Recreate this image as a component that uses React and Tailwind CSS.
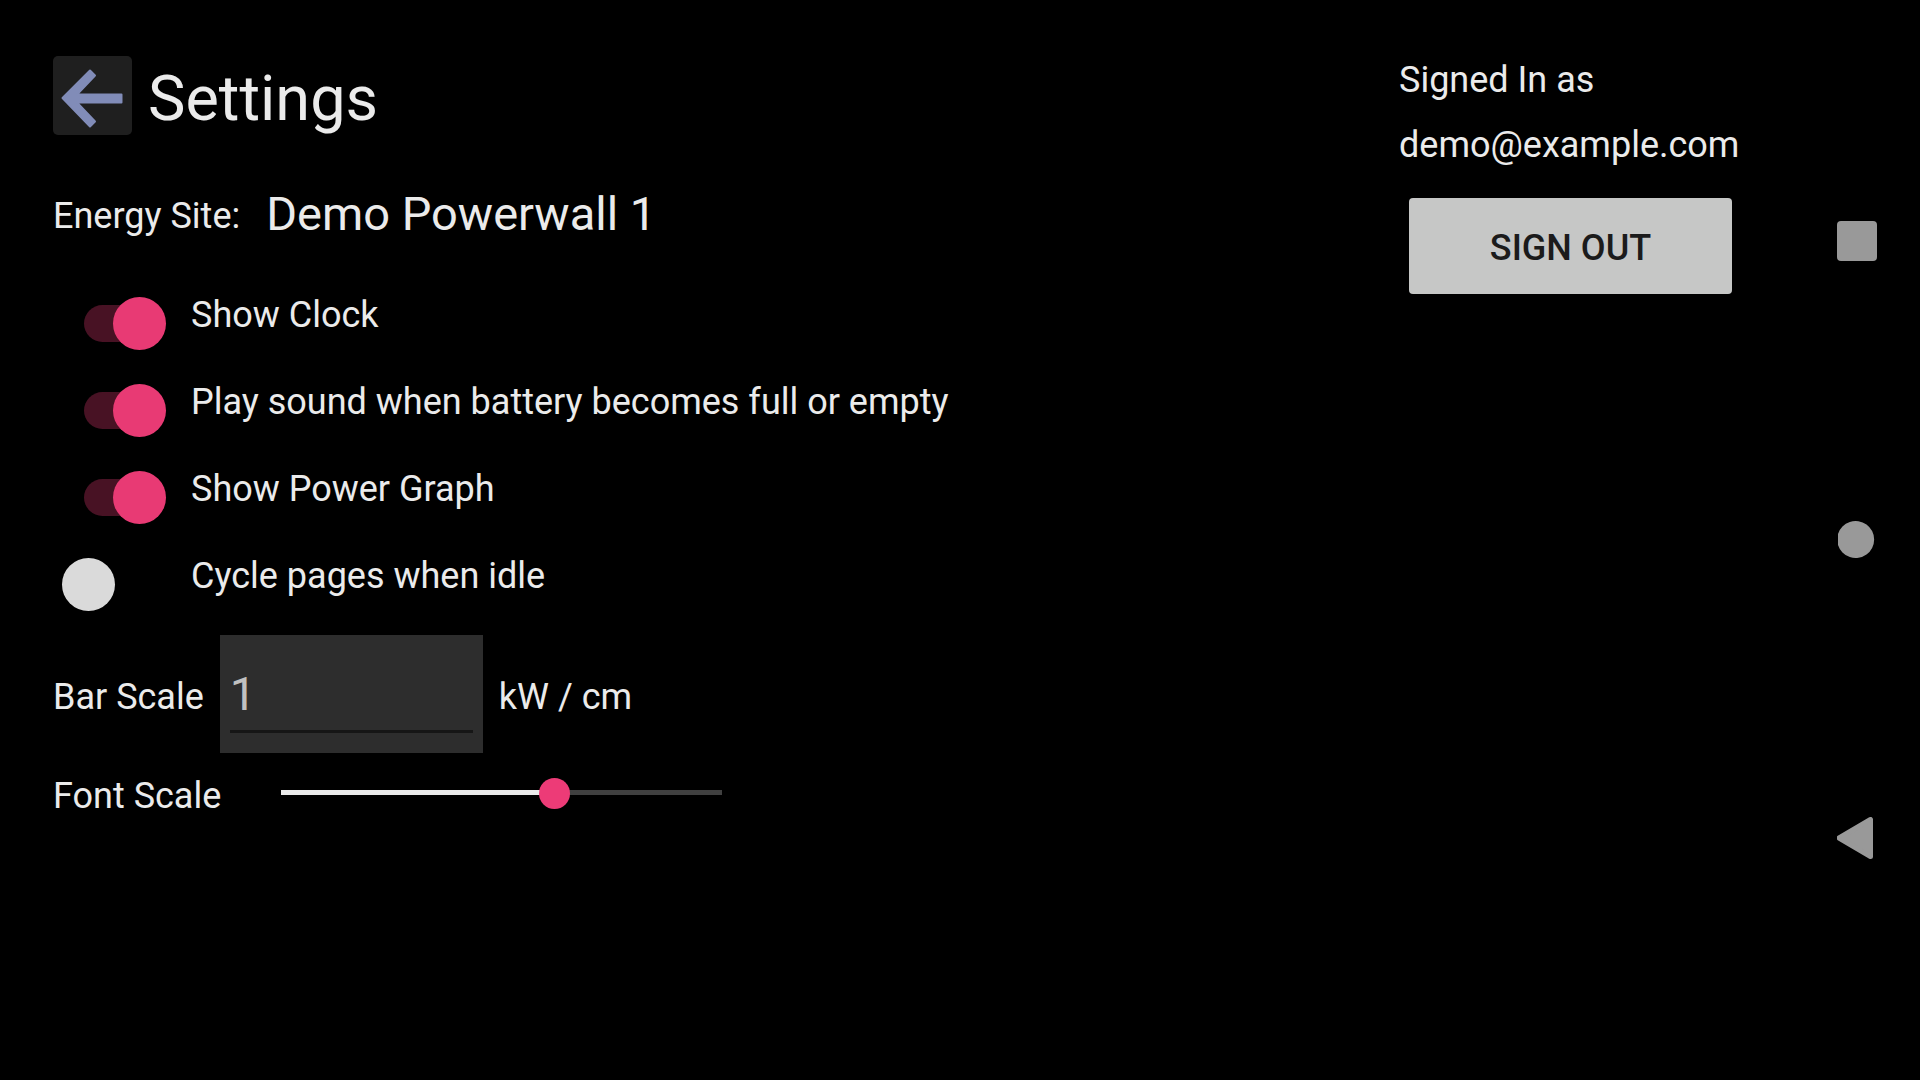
import React, { useState } from "react";

const toggles = [
  { id: "clock", label: "Show Clock", on: true },
  { id: "sound", label: "Play sound when battery becomes full or empty", on: true },
  { id: "graph", label: "Show Power Graph", on: true },
  { id: "cycle", label: "Cycle pages when idle", on: false },
];

function Toggle({ id, label, on }) {
  const [checked, setChecked] = useState(on);
  return (
    <div className="flex h-[87px] items-start gap-[25px] pl-[9px]">
      <input
        id={id}
        type="checkbox"
        role="switch"
        checked={checked}
        onChange={(e) => setChecked(e.target.checked)}
        className="relative h-[53px] w-[104px] shrink-0 cursor-pointer appearance-none self-center after:absolute after:top-0 after:left-0 after:size-[53px] after:rounded-full after:bg-[#dadada] checked:before:absolute checked:before:top-2 checked:before:left-[22px] checked:before:h-[37px] checked:before:w-[72px] checked:before:rounded-full checked:before:bg-[#481224] checked:after:left-[51px] checked:after:bg-[#e83a74]"
      />
      <label htmlFor={id} className="leading-[70px]">
        {label}
      </label>
    </div>
  );
}

function FontScale() {
  const [value, setValue] = useState(63);
  return (
    <div className="flex h-[60px] items-center">
      <label htmlFor="font-scale" className="w-[228px]">
        Font Scale
      </label>
      <input
        id="font-scale"
        type="range"
        min="0"
        max="100"
        value={value}
        onChange={(e) => setValue(Number(e.target.value))}
        style={{ "--fill": `${value}%` }}
        className="mb-2 h-[31px] w-[441px] cursor-pointer appearance-none bg-transparent [&::-webkit-slider-runnable-track]:h-[5px] [&::-webkit-slider-runnable-track]:bg-[linear-gradient(to_right,#ebebeb_var(--fill),#404040_var(--fill))] [&::-webkit-slider-thumb]:-mt-3 [&::-webkit-slider-thumb]:size-[31px] [&::-webkit-slider-thumb]:appearance-none [&::-webkit-slider-thumb]:rounded-full [&::-webkit-slider-thumb]:bg-[#ed3b77]"
      />
    </div>
  );
}

export default function App() {
  const [scale, setScale] = useState("1");
  return (
    <div className="flex min-h-screen bg-black font-['Roboto',sans-serif] text-[36px] text-[#ebebeb]">
      <main className="flex-1 pt-14 pl-[53px]">
        <header className="flex items-start gap-4">
          <button type="button" aria-label="Back" className="size-[79px] shrink-0 rounded-[5px] bg-[#1f1f1f]">
            <svg viewBox="0 0 79 79" className="size-full">
              <path
                d="M9.500 42L37 14.500L42 19.500L24 38.500H68.500V46.500H24L42 65.500L37 70.500Z"
                fill="#818cb8"
                stroke="#818cb8"
                strokeWidth="2"
                strokeLinejoin="round"
              />
            </svg>
          </button>
          <h1 className="text-[63px] leading-[86px]">Settings</h1>
        </header>

        <div className="mt-10 flex h-16 items-center gap-[26px]">
          <span className="pt-1">Energy Site:</span>
          <span className="text-[47px]">Demo Powerwall 1</span>
        </div>

        <div className="mt-[34px]">
          {toggles.map((t) => (
            <Toggle key={t.id} {...t} />
          ))}
        </div>

        <div className="mt-[7px] flex items-center gap-4">
          <label htmlFor="bar-scale" className="pt-[6px]">
            Bar Scale
          </label>
          <div className="w-[263px] bg-[#2d2d2d] px-[10px] pt-6 pb-5">
            <input
              id="bar-scale"
              type="text"
              inputMode="decimal"
              value={scale}
              onChange={(e) => setScale(e.target.value)}
              className="block h-[74px] w-full border-b-3 border-[#161616] bg-transparent pb-[2px] text-[47px] text-[#c0c0c0] outline-none"
            />
          </div>
          <span className="pt-[6px]">kW / cm</span>
        </div>

        <div className="mt-[13px]">
          <FontScale />
        </div>
      </main>

      <aside className="mr-[51px] w-[343px] pt-12">
        <p className="leading-[65px]">Signed In as</p>
        <p className="leading-[65px]">demo@example.com</p>
        <div className="px-[10px] pt-5">
          <button type="button" className="h-24 w-full rounded-[4px] bg-[#c6c7c6] pt-[3px] font-medium text-[#1b1b1b]">
            SIGN OUT
          </button>
        </div>
      </aside>

      <nav aria-label="System" className="flex w-[127px] flex-col py-[92px]">
        <button type="button" aria-label="Overview" className="flex flex-1 items-center justify-center">
          <svg viewBox="0 0 40 40" className="size-10" fill="#999999">
            <rect width="40" height="40" rx="4" />
          </svg>
        </button>
        <button type="button" aria-label="Home" className="flex flex-1 items-center justify-center">
          <svg viewBox="0 0 40 40" className="size-10" fill="#999999">
            <path d="M1 14A18.500 18.500 0 1 1 1 25Z" />
          </svg>
        </button>
        <button type="button" aria-label="Back" className="flex flex-1 items-center justify-center">
          <svg viewBox="0 0 40 44" className="h-11 w-10" fill="#999999" stroke="#999999" strokeWidth="5" strokeLinejoin="round">
            <path d="M2 21L33.500 2.500V39.500Z" />
          </svg>
        </button>
      </nav>
    </div>
  );
}
